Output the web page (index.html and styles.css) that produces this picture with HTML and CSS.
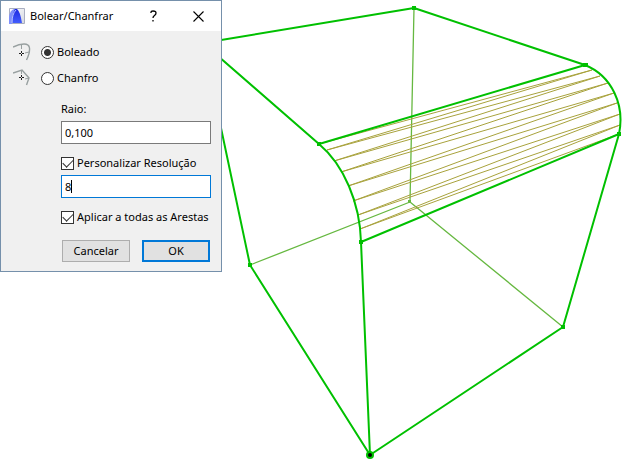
FILE: index.html
```html
<!DOCTYPE html>
<html lang="pt">
<head>
    <meta charset="UTF-8">
    <meta name="viewport" content="width=device-width, initial-scale=1.0">
    <title>Bolear/Chanfrar</title>
    <link rel="stylesheet" href="styles.css">
</head>
<body>
    <main class="viewport">
        <svg class="model" viewBox="0 0 625 462" aria-hidden="true">
            <!-- Hidden edges -->
            <path class="edge-hidden" d="M414 8L410 202L250 265M410 202L563 327"/>
            <!-- Triangulated fillet surface -->
            <path class="facet" d="M319 144L592 70L327 150L600 76L334 161L608 83L341 172L614 93L348 186L617 103L353 201L620 114L358 215L620 125L360 229L619 134"/>
            <!-- Visible edges -->
            <path class="edge" d="M203 43L414 8L585 65L319 144L203 43L250 265L370 455L361 242L619 134L563 327L370 455"/>
            <path class="edge" d="M319 144C344 165 360 203 361 242M585 65C612 76 625 105 619 134"/>
            <path class="node" d="M412 6h4v4h-4zM583 63h5v4h-5zM317 142h4v4h-4zM359 240h4v4h-4zM617 132h4v4h-4zM248 263h4v4h-4zM561 325h4v4h-4z"/>
            <path class="node-hidden" d="M408 200h3v3h-3z"/>
            <circle class="node" cx="370" cy="455" r="4"/>
            <circle class="origin" cx="370" cy="455" r="2"/>
        </svg>

        <form class="dialog" onsubmit="return false">
            <header class="title-bar">
                <svg class="app-icon" width="16" height="16" viewBox="0 0 16 16" aria-hidden="true">
                    <defs>
                        <linearGradient id="paper" x1="0" y1="0" x2="1" y2="1">
                            <stop offset="0" stop-color="#ffffff"/>
                            <stop offset="1" stop-color="#d4d7e0"/>
                        </linearGradient>
                        <linearGradient id="arch" x1="0" y1="0" x2="0" y2="1">
                            <stop offset="0" stop-color="#1c28e0"/>
                            <stop offset="1" stop-color="#4460ff"/>
                        </linearGradient>
                    </defs>
                    <path d="M.5 .5h15v15H.5z" fill="url(#paper)" stroke="#a9aec0"/>
                    <path d="M0 16V9Q1 2 5 1H8Q6 3 4 8Q3 12 3 16z" fill="#7f90fb"/>
                    <path d="M3 16Q3 6 6 1H8Q11 3 13 15H3z" fill="url(#arch)"/>
                    <path d="M3 15Q3 6 7 2" fill="none" stroke="#b7c2ff"/>
                </svg>
                <h1>Bolear/Chanfrar</h1>
                <button class="title-button" type="button" aria-label="Ajuda">
                    <svg width="9" height="12" viewBox="0 0 9 12"><path d="M2 3V2Q2 1 4 1Q7 1 7 3Q7 4.500 5.500 5.500Q4 6.500 4 8M4 10v1.500" fill="none" stroke="#000" stroke-width="1.300"/></svg>
                </button>
                <button class="title-button" type="button" aria-label="Fechar">
                    <svg width="11" height="11" viewBox="0 0 11 11"><path d="M.5 .5L10.500 10.500M10.500 .5L.5 10.500" stroke="#000" stroke-width="1.100"/></svg>
                </button>
            </header>

            <div class="modes">
                <label class="mode">
                    <svg width="18" height="18" viewBox="0 0 18 18" aria-hidden="true">
                        <path d="M0 4Q6 1 11 1Q16 1 16.500 5Q17 10 13.500 17" fill="none" stroke="#98a0a0" stroke-width="1.400"/>
                        <path d="M8.500 2V6M16 9L12 10" stroke="#98a0a0"/>
                        <path d="M8.500 8v2M8.500 11v2M6 10.500h2M9 10.500h2" stroke="#222"/>
                    </svg>
                    <input class="radio" type="radio" name="modo" checked>
                    <span>Boleado</span>
                </label>
                <label class="mode">
                    <svg width="18" height="18" viewBox="0 0 18 18" aria-hidden="true">
                        <path d="M0 4L9 1L16 9L13.500 16" fill="none" stroke="#98a0a0" stroke-width="1.400"/>
                        <path d="M8.500 1V5M16 9L12 10" stroke="#98a0a0"/>
                        <path d="M8.500 6v2M8.500 9v2M6 8.500h2M9 8.500h2" stroke="#222"/>
                    </svg>
                    <input class="radio" type="radio" name="modo">
                    <span>Chanfro</span>
                </label>
            </div>

            <div class="settings">
                <label for="raio">Raio:</label>
                <input class="field" id="raio" type="text" value="0,100">
                <label class="option">
                    <input class="check" type="checkbox" checked>
                    <span>Personalizar Resolução</span>
                </label>
                <input class="field field-active" type="text" value="8" aria-label="Resolução">
                <label class="option">
                    <input class="check" type="checkbox" checked>
                    <span>Aplicar a todas as Arestas</span>
                </label>
                <div class="actions">
                    <button class="button" type="button">Cancelar</button>
                    <button class="button button-default" type="submit">OK</button>
                </div>
            </div>
        </form>
    </main>
</body>
</html>
```

FILE: styles.css
```css
* {
    box-sizing: border-box;
}

body {
    margin: 0;
    background: #fff;
    color: #000;
    font-family: "Noto Sans", "Open Sans", sans-serif;
    font-size: 11px;
    line-height: 16px;
}

button, input {
    margin: 0;
    font: inherit;
    color: inherit;
}

.viewport {
    position: relative;
}

/* 3D model */
.model {
    display: block;
    width: 100%;
}

.edge, .edge-hidden, .facet {
    fill: none;
    stroke-linejoin: round;
}

.edge {
    stroke: #00c000;
    stroke-width: 2;
}

.edge-hidden {
    stroke: #66b840;
    stroke-width: 1.3;
}

.facet {
    stroke: #a8a23c;
    stroke-width: 1;
}

.node {
    fill: #00c000;
}

.node-hidden {
    fill: #66b840;
}

.origin {
    fill: #000;
}

/* Dialog window */
.dialog {
    position: absolute;
    top: 0;
    left: 0;
    background: #f0f0f0;
    border: 1px solid #7590ab;
}

.title-bar {
    display: flex;
    align-items: center;
    height: 30px;
    padding-left: 8px;
    background: #fff;
}

.title-bar h1 {
    flex: 1;
    margin: 0 0 0 5px;
    font-size: 11px;
    font-weight: normal;
}

.title-button {
    display: flex;
    align-items: center;
    justify-content: center;
    width: 45px;
    height: 30px;
    padding: 0;
    background: none;
    border: 0;
}

.modes {
    display: flex;
    flex-direction: column;
    gap: 8px;
    padding: 12px 12px 0;
}

.mode {
    display: flex;
    align-items: center;
    height: 18px;
}

.radio {
    appearance: none;
    width: 13px;
    height: 13px;
    margin: 0 3px 0 10px;
    background: #fff;
    border: 1px solid #333;
    border-radius: 50%;
}

.radio:checked {
    background: radial-gradient(circle, #333 3px, #fff 4px);
}

.settings {
    display: flex;
    flex-direction: column;
    padding: 14px 10px 9px 60px;
}

.field {
    width: 150px;
    height: 23px;
    margin-top: 4px;
    padding: 0 3px;
    background: #fff;
    border: 1px solid #7a7a7a;
    outline: 0;
}

.field:focus {
    border-color: #0078d7;
}

/* Active field with a steady text cursor */
.field-active {
    background: linear-gradient(#000, #000) 9px center / 1px 13px no-repeat #fff;
    border-color: #0078d7;
    caret-color: transparent;
}

.option {
    display: flex;
    align-items: center;
    gap: 3px;
    margin-top: 11px;
}

.check {
    appearance: none;
    display: grid;
    place-items: center;
    width: 13px;
    height: 13px;
    background: #fff;
    border: 1px solid #333;
}

.check:checked::before {
    content: "";
    width: 9px;
    height: 5px;
    margin-bottom: 3px;
    border: solid #333;
    border-width: 0 0 1px 1px;
    transform: rotate(-45deg);
}

.actions {
    display: flex;
    justify-content: space-between;
    margin-top: 15px;
    padding: 0 1px;
}

.button {
    width: 68px;
    height: 22px;
    padding: 0;
    background: #e1e1e1;
    border: 1px solid #adadad;
}

.button-default {
    border: 2px solid #0078d7;
}
```
